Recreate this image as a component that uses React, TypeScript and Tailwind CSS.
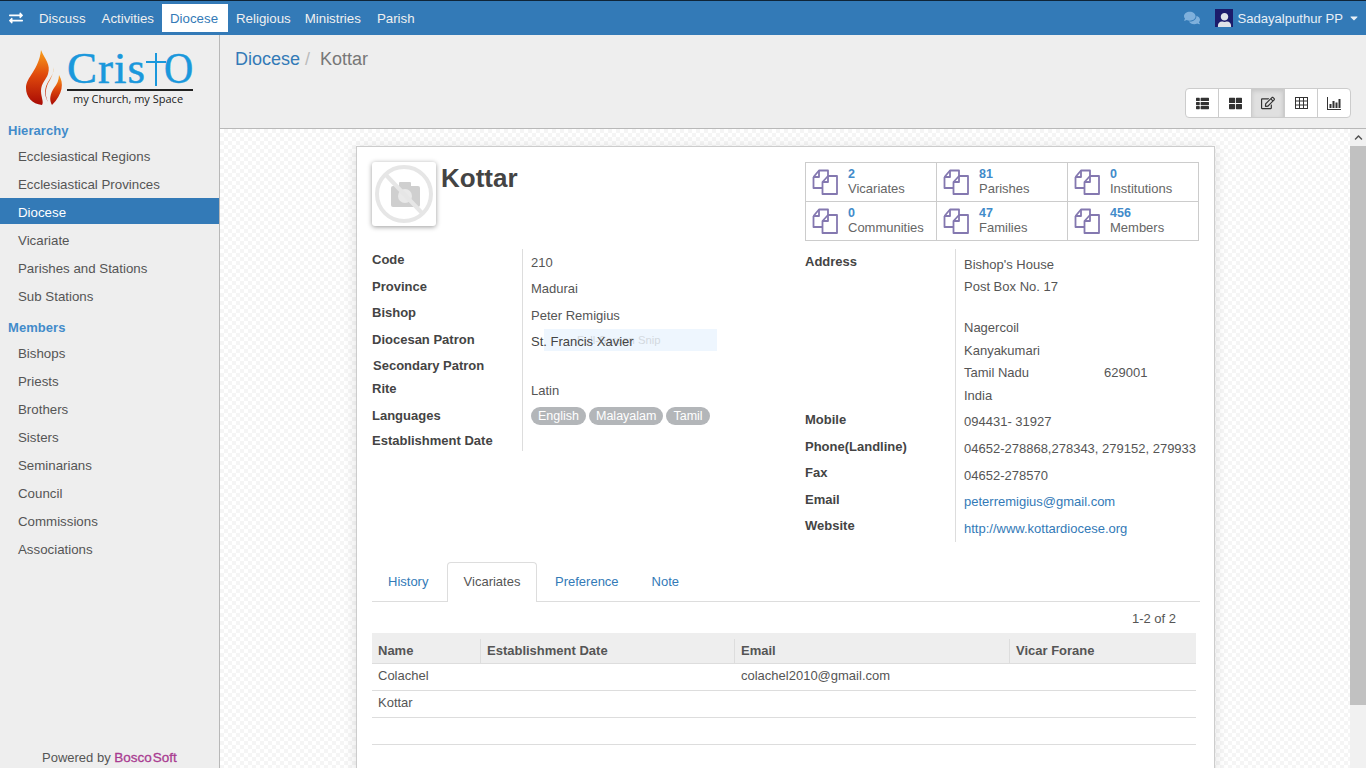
import { FaExchangeAlt, FaComments, FaThList, FaThLarge, FaRegEdit, FaChevronUp, FaUser, FaCaretDown } from "react-icons/fa";

const navLinks = ["Discuss", "Activities", "Diocese", "Religious", "Ministries", "Parish"];
const hierarchy = ["Ecclesiastical Regions", "Ecclesiastical Provinces", "Diocese", "Vicariate", "Parishes and Stations", "Sub Stations"];
const members = ["Bishops", "Priests", "Brothers", "Sisters", "Seminarians", "Council", "Commissions", "Associations"];

const stats = [
  { count: "2", label: "Vicariates" },
  { count: "81", label: "Parishes" },
  { count: "0", label: "Institutions" },
  { count: "0", label: "Communities" },
  { count: "47", label: "Families" },
  { count: "456", label: "Members" },
];

const leftLabels = [
  { text: "Code", cls: "mt-px" },
  { text: "Province", cls: "mt-[7px]" },
  { text: "Bishop", cls: "mt-[6px]" },
  { text: "Diocesan Patron", cls: "mt-[7px]" },
  { text: "Secondary Patron", cls: "mt-[6px] ml-px" },
  { text: "Rite", cls: "mt-[3px]" },
  { text: "Languages", cls: "mt-[7px]" },
  { text: "Establishment Date", cls: "mt-[5px]" },
];

const rightLabels = [
  { text: "Address", cls: "mt-[3px]" },
  { text: "Mobile", cls: "mt-[138px]" },
  { text: "Phone(Landline)", cls: "mt-[7px]" },
  { text: "Fax", cls: "mt-[6px]" },
  { text: "Email", cls: "mt-[7px]" },
  { text: "Website", cls: "mt-[6px]" },
];

const FilesIcon = () => (
  <svg width="26" height="26" viewBox="0 0 26 26" fill="none" stroke="#8478b0" strokeWidth="1.8" strokeLinejoin="round" className="shrink-0">
    <path d="M1.5 8 L7 1.5 H16 V7" />
    <path d="M1.5 8 V19 H10" />
    <path d="M7 1.5 V8 H1.5" />
    <path d="M10.5 13 L16 7 H25 V25 H10.5 Z" />
    <path d="M16 7 V13 H10.5" />
  </svg>
);

const ChartIcon = () => (
  <svg width="14" height="13" viewBox="0 0 14 13" fill="#333" className="shrink-0">
    <rect x="0" y="0" width="1" height="13" />
    <rect x="0" y="12" width="14" height="1" />
    <rect x="2.5" y="7" width="2" height="4" />
    <rect x="5.5" y="4" width="2" height="7" />
    <rect x="8.5" y="5.5" width="2" height="5.5" />
    <rect x="11.5" y="2" width="2" height="9" />
  </svg>
);

const GridIcon = () => (
  <svg width="13" height="12" viewBox="0 0 13 12" fill="none" stroke="#333" className="shrink-0">
    <rect x="0.5" y="0.5" width="12" height="11" strokeWidth="1" />
    <path d="M0 4 H13 M0 8 H13 M4.5 0 V12 M8.5 0 V12" strokeWidth="1" />
  </svg>
);

const NoPhoto = () => (
  <svg width="58" height="58" viewBox="0 0 58 58" fill="none">
    <rect x="16" y="21" width="29" height="21" rx="2" fill="#cfcfcf" />
    <rect x="24" y="17" width="12" height="6" rx="1" fill="#cfcfcf" />
    <circle cx="30" cy="31" r="7" fill="#e9e9e9" />
    <circle cx="29" cy="29" r="27" stroke="#e6e6e6" strokeWidth="4" />
    <path d="M11 10 L47 48" stroke="#e6e6e6" strokeWidth="4" />
  </svg>
);

const Logo = () => (
  <div className="flex h-[85px] pl-[26px] pt-[15px]">
    <svg width="38" height="56" viewBox="0 0 38 56" className="shrink-0">
      <defs>
        <linearGradient id="flame" x1="0" y1="0" x2="0" y2="1">
          <stop offset="0" stopColor="#f9a01b" />
          <stop offset="0.45" stopColor="#e04a0c" />
          <stop offset="1" stopColor="#a80a05" />
        </linearGradient>
      </defs>
      <path d="M15 0 C19 10 25 14 22 24 C20 30 15 33 15 41 C15 47 18 52 16 55 C6 54 0 47 0 38 C0 27 13 20 15 0 Z" fill="url(#flame)" />
      <path d="M27 17 C29 23 24 28 21 34 C18 40 19 47 22 52 C18 44 20 36 24 30 C26 26 28 22 27 17 Z" fill="url(#flame)" />
      <path d="M33 25 C38 33 37 44 26 55 C23 50 24 44 28 38 C31 34 33 30 33 25 Z" fill="url(#flame)" />
    </svg>
    <div className="ml-[3px] w-[126px]">
      <div className="flex h-[37px] items-center text-[#1a98dc] text-[45px] leading-[37px] tracking-[1px] [-webkit-text-stroke:0.5px_#1a98dc] [font-family:'Liberation_Serif',serif]">
        <span>Cris</span>
        <span className="relative h-[37px] w-[18px] shrink-0">
          <span className="absolute left-[9px] top-[3px] h-[33px] w-[2px] bg-[#1a98dc]" />
          <span className="absolute left-0 top-[11px] h-[2px] w-[20px] bg-[#1a98dc]" />
        </span>
        <span className="inline-block origin-left scale-x-90">O</span>
      </div>
      <div className="mt-[2px] h-[2px] bg-[#222]" />
      <div className="-mt-px whitespace-nowrap pl-[6px] text-[11px] leading-[18px] font-medium text-[#222] [font-family:'Open_Sans',sans-serif]">my Church, my Space</div>
    </div>
  </div>
);

const Sidebar = () => (
  <aside className="flex w-[220px] shrink-0 flex-col border-r border-[#b8b8b8] bg-[#eee]">
    <Logo />
    <h4 className="mt-[3px] h-4 pl-2 text-[13px] tracking-[0.05px] leading-4 font-bold text-[#428bca]">Hierarchy</h4>
    <div className="mt-[3px] flex flex-col text-[13.3px]">
      {hierarchy.map((item) => (
        <div
          key={item}
          className={`mb-[2px] flex h-[26px] items-center pl-[18px] pt-[4px] ${item === "Diocese" ? "bg-[#337ab7] text-white" : "text-[#555]"}`}
        >
          {item}
        </div>
      ))}
    </div>
    <h4 className="mt-[10px] h-4 pl-2 text-[13px] tracking-[0.05px] leading-4 font-bold text-[#428bca]">Members</h4>
    <div className="mt-[3px] flex flex-col text-[13.3px]">
      {members.map((item) => (
        <div key={item} className="mb-[2px] flex h-[26px] items-center pl-[18px] pt-[4px] text-[#555]">
          {item}
        </div>
      ))}
    </div>
    <div className="mt-auto h-[20px] pl-[42px] leading-5 text-[#555]">
      Powered by <span className="text-[13.5px] text-[#a93b91] [-webkit-text-stroke:0.3px_#a93b91]">Bosco</span>
      <span className="ml-[1px] text-[13.5px] text-[#a93b91] [-webkit-text-stroke:0.3px_#a93b91]">Soft</span>
    </div>
  </aside>
);

const DetailBlock = () => (
  <div className="flex">
    {/* left column */}
    <div className="w-[433px] shrink-0">
      <div className="flex h-[87px]">
        <div className="flex h-[64px] w-[64px] items-center justify-center rounded-[3px] bg-white shadow-[0_1px_5px_rgba(0,0,0,0.4)]">
          <NoPhoto />
        </div>
        <h1 className="ml-[5px] text-[26px] leading-[32px] font-bold text-[#444]">Kottar</h1>
      </div>
      <div className="relative flex">
        <div className="flex w-[150px] shrink-0 flex-col font-bold text-[#444]">
          {leftLabels.map((label) => (
            <div key={label.text} className={`h-5 leading-5 ${label.cls}`}>
              {label.text}
            </div>
          ))}
        </div>
        <div className="flex flex-1 flex-col self-stretch border-l border-[#ddd] pl-2 pt-[4px] text-[#555]">
          <div className="h-5 leading-5">210</div>
          <div className="mt-[6px] h-5 leading-5">Madurai</div>
          <div className="mt-[7px] h-5 leading-5">Peter Remigius</div>
          <div className="relative z-10 mt-[6px] h-5 leading-5 text-[#444]">St. Francis Xavier</div>
          <div className="mt-[29px] h-5 leading-5">Latin</div>
          <div className="mt-[6px] flex gap-[3px]">
            {["English", "Malayalam", "Tamil"].map((lang) => (
              <span key={lang} className="flex h-[18px] items-center rounded-full bg-[#b3b6b9] px-[7px] text-[12.5px] text-white">
                {lang}
              </span>
            ))}
          </div>
        </div>
        <div className="absolute left-[172px] top-[80px] flex h-[22px] w-[173px] items-center bg-[#eef6fe] pl-[33px] text-[11.3px] text-[#d3d9df]">
          Full-Screen Snip
        </div>
      </div>
    </div>

    {/* right column */}
    <div className="w-[394px] shrink-0">
      <div className="grid h-[79px] grid-cols-3 border-t border-l border-[#ccc]">
        {stats.map((stat) => (
          <div key={stat.label} className="flex h-[39px] items-center gap-[10px] border-r border-b border-[#ccc] pl-[6px] text-[#666]">
            <FilesIcon />
            <div className="mt-[4px] self-start">
              <div className="text-[12.5px] leading-[14px] font-bold text-[#428bca]">{stat.count}</div>
              <div className="leading-[15px]">{stat.label}</div>
            </div>
          </div>
        ))}
      </div>
      <div className="mt-[8px] flex">
        <div className="flex w-[150px] shrink-0 flex-col font-bold text-[#444]">
          {rightLabels.map((label) => (
            <div key={label.text} className={`h-5 leading-5 ${label.cls}`}>
              {label.text}
            </div>
          ))}
        </div>
        <div className="flex h-[293px] flex-1 flex-col border-l border-[#ddd] pl-2 pt-[6px] text-[#555]">
          <div className="h-5 leading-5">Bishop's House</div>
          <div className="mt-[2px] h-5 leading-5">Post Box No. 17</div>
          <div className="mt-[21px] h-5 leading-5">Nagercoil</div>
          <div className="mt-[3px] h-5 leading-5">Kanyakumari</div>
          <div className="mt-[2px] flex h-5 leading-5">
            <span className="w-[140px]">Tamil Nadu</span>
            <span>629001</span>
          </div>
          <div className="mt-[3px] h-5 leading-5">India</div>
          <div className="mt-[6px] h-5 leading-5">094431- 31927</div>
          <div className="mt-[7px] h-5 leading-5 whitespace-nowrap">04652-278868,278343, 279152, 279933</div>
          <div className="mt-[7px] h-5 leading-5">04652-278570</div>
          <div className="mt-[6px] h-5 leading-5 text-[#337ab7]">peterremigius@gmail.com</div>
          <div className="mt-[7px] h-5 leading-5 text-[#337ab7]">http://www.kottardiocese.org</div>
        </div>
      </div>
    </div>
  </div>
);

const Tabs = () => (
  <div className="mt-[20px] flex h-[40px] border-b border-[#ddd] text-[#337ab7]">
    <div className="flex w-[75px] items-center pl-[16px]">History</div>
    <div className="flex h-[40px] w-[90px] items-center justify-center rounded-t border border-b-0 border-[#ddd] bg-white pb-[2px] text-[#555]">
      Vicariates
    </div>
    <div className="ml-[18px] flex items-center">Preference</div>
    <div className="ml-[33px] flex items-center">Note</div>
  </div>
);

const VicariateTable = () => (
  <>
    <div className="flex h-[31px] items-center justify-end pr-[24px] pt-[2px] text-[#555]">1-2 of 2</div>
    <div className="w-[824px] text-[#555]">
      <div className="grid h-[31px] grid-cols-[108px_254px_275px_187px] border-b border-[#ddd] bg-[#eee] font-bold">
        <div className="mt-[6px] flex items-center pl-[6px]">Name</div>
        <div className="mt-[6px] flex items-center border-l border-[#ddd] pl-[6px]">Establishment Date</div>
        <div className="mt-[6px] flex items-center border-l border-[#ddd] pl-[6px]">Email</div>
        <div className="mt-[6px] flex items-center border-l border-[#ddd] pl-[6px]">Vicar Forane</div>
      </div>
      <div className="grid h-[27px] grid-cols-[108px_254px_275px_187px] items-center border-b border-[#ddd] pb-[2px] pl-[6px]">
        <div>Colachel</div>
        <div />
        <div className="whitespace-nowrap pl-px">colachel2010@gmail.com</div>
      </div>
      <div className="flex h-[27px] items-center border-b border-[#ddd] pb-[2px] pl-[6px]">Kottar</div>
      <div className="h-[27px] border-b border-[#ddd]" />
    </div>
  </>
);

const Scrollbar = () => (
  <div className="flex w-4 shrink-0 flex-col bg-[#f1f1f1]">
    <div className="flex h-[17px] items-center justify-center text-[#505050]">
      <FaChevronUp size={9} />
    </div>
    <div className="h-[559px] bg-[#c1c1c1]" />
  </div>
);

const navPadding = (link: string) => {
  if (link === "Diocese") return "px-[8px] w-[66px] bg-white text-[#337ab7]";
  if (link === "Religious") return "pl-[8px] pr-[6px] text-[#f0f0f0]";
  return "px-[8px] text-[#f0f0f0]";
};

export default function App() {
  const toolbar = [
    <FaThList key="list" size={13} />,
    <FaThLarge key="grid" size={13} />,
    <FaRegEdit key="edit" size={14} />,
    <GridIcon key="table" />,
    <ChartIcon key="chart" />,
  ];

  return (
    <div className="flex h-screen flex-col overflow-hidden bg-[#eee] text-[13px] [font-family:'Liberation_Sans',Arial,sans-serif]">
      {/* top bar */}
      <header className="flex h-[35px] shrink-0 items-center border-t border-black/70 bg-[#337ab7] text-[13.3px] text-white">
        <FaExchangeAlt size={14} className="ml-[9px] mr-[8px]" />
        <nav className="flex items-center">
          {navLinks.map((link) => (
            <div key={link} className={`flex h-[28px] items-center pt-[2px] ${navPadding(link)}`}>
              {link}
            </div>
          ))}
        </nav>
        <div className="ml-auto flex items-center pr-[6px] pt-px">
          <FaComments size={16} className="mr-[15px] text-[#7fb0dc]" />
          <div className="flex h-[18px] w-[18px] items-end justify-center overflow-hidden bg-[#1c1c6b] text-[#dfe3e8]">
            <FaUser size={15} className="translate-y-[1px]" />
          </div>
          <span className="ml-[4px] text-[13.1px] text-[#e8eff6]">Sadayalputhur PP</span>
          <FaCaretDown size={12} className="ml-[5px] text-[#e8eff6]" />
        </div>
      </header>

      <div className="flex min-h-0 flex-1">
        <Sidebar />
        <main className="flex min-w-0 flex-1 flex-col">
          <div className="relative h-[94px] shrink-0 border-b border-[#b8b8b8] bg-[#eee]">
            <div className="pl-[15px] pt-[12px] text-[18px] leading-6">
              <span className="text-[#337ab7]">Diocese</span>
              <span className="ml-[5px] text-[#bbb]">/</span>
              <span className="ml-[10px] text-[#777]">Kottar</span>
            </div>
            <div className="absolute right-[15px] top-[53px] flex h-[30px] rounded border border-[#ccc] bg-white text-[#333]">
              {toolbar.map((icon, i) => (
                <div
                  key={i}
                  className={`flex items-center justify-center ${i === 0 ? "w-[32px]" : "w-[33px] border-l border-[#ccc]"} ${i === 2 ? "border-r border-[#adadad] bg-[#e0e0e0] shadow-[inset_0_2px_4px_rgba(0,0,0,0.12)]" : ""}`}
                >
                  {icon}
                </div>
              ))}
            </div>
          </div>

          <div className="flex min-h-0 flex-1">
            <div className="min-w-0 flex-1 overflow-hidden bg-white bg-[repeating-conic-gradient(#f5f5f5_0%_25%,#ffffff_0%_50%)] bg-[length:8px_8px] pt-[17px]">
              <div className="ml-[136px] h-[700px] w-[859px] border border-[#ccc] bg-white pl-[15px] pr-[14px] pt-[15px] shadow-[0_2px_12px_rgba(0,0,0,0.12)]">
                <DetailBlock />
                <Tabs />
                <VicariateTable />
              </div>
            </div>
            <Scrollbar />
          </div>
        </main>
      </div>
    </div>
  );
}
